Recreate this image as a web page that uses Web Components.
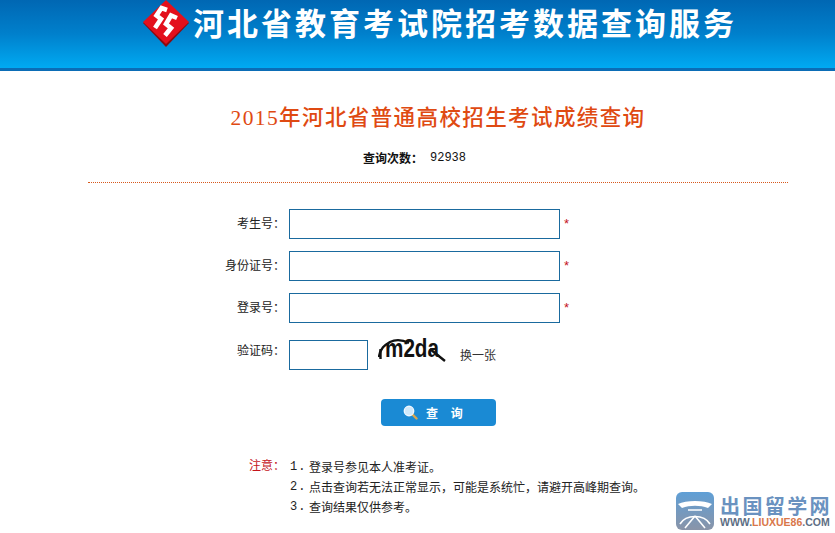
<!DOCTYPE html>
<html lang="zh">
<head>
<meta charset="utf-8">
<title>成绩查询</title>
<style>
  html, body { margin: 0; padding: 0; background: #fff; }
  body { font: 12px "Noto Sans CJK SC", "Liberation Sans", sans-serif; color: #222; height: 533px; overflow: hidden; position: relative; }
</style>
</head>
<body>
<exam-header>河北省教育考试院招考数据查询服务</exam-header>
<query-panel>
  <span slot="title">2015年河北省普通高校招生考试成绩查询</span>
  <span slot="count">92938</span>
  <form-row label="考生号：" required></form-row>
  <form-row label="身份证号：" required></form-row>
  <form-row label="登录号：" required></form-row>
  <captcha-row label="验证码："></captcha-row>
  <query-button>查 询</query-button>
  <notice-list>
    <notice-item n="1.">登录号参见本人准考证。</notice-item>
    <notice-item n="2.">点击查询若无法正常显示，可能是系统忙，请避开高峰期查询。</notice-item>
    <notice-item n="3.">查询结果仅供参考。</notice-item>
  </notice-list>
</query-panel>
<site-mark></site-mark>

<script>
class ExamHeader extends HTMLElement {
  connectedCallback() {
    this.attachShadow({ mode: 'open' }).innerHTML = `
    <style>
      :host {
        display: flex;
        align-items: flex-start;
        height: 68px;
        padding-left: 142px;
        background: linear-gradient(#0067b3, #0080cc 50%, #00aaf2);
        border-bottom: 3px solid #0b6db6;
      }
      svg { flex: none; display: block; }
      .name {
        margin: 0 0 0 3px;
        color: #fff;
        font-size: 31px;
        font-weight: 700;
        line-height: 44px;
        letter-spacing: 3px;
        white-space: nowrap;
      }
    </style>
    <svg width="48" height="47" viewBox="0 0 48 47">
      <path d="M24 3 47 23 24 47 1 23Z" fill="#8c0a10"/>
      <path d="M24 0 47 22 24 44 1 22Z" fill="#e3101c"/>
      <g fill="none" stroke="#fff" stroke-width="4.6" stroke-linejoin="miter">
        <path d="M25 10 19.5 8 14.5 15.5 19 19 13 28"/>
        <path d="M35 18 29 15.5 24 24 29 28 23 35.5"/>
      </g>
    </svg>
    <div class="name"><slot></slot></div>`;
  }
}

class QueryPanel extends HTMLElement {
  connectedCallback() {
    this.attachShadow({ mode: 'open' }).innerHTML = `
    <style>
      :host { display: block; width: 700px; margin-left: 88px; }
      h1 {
        margin: 0;
        padding-top: 31px;
        height: 32px;
        text-align: center;
        color: #df4a12;
        font: 500 21.5px/32px "Liberation Serif", "Noto Sans CJK SC", serif;
        letter-spacing: 1.4px;
      }
      .count {
        margin-top: 14px;
        height: 20px;
        line-height: 20px;
        padding-left: 275px;
        display: flex;
        color: #111;
      }
      .count b { width: 67px; }
      .count span { font-family: "Liberation Mono", monospace; font-size: 12px; }
      hr {
        margin: 14px 0 0;
        border: 0;
        border-top: 1px dotted #d8591c;
      }
      .rows { padding-top: 26px; display: grid; row-gap: 12px; }
    </style>
    <h1><slot name="title"></slot></h1>
    <div class="count"><b>查询次数：</b><span><slot name="count"></slot></span></div>
    <hr>
    <div class="rows"><slot></slot></div>`;
  }
}

class FormRow extends HTMLElement {
  connectedCallback() {
    this.attachShadow({ mode: 'open' }).innerHTML = `
    <style>
      :host { display: grid; grid-template-columns: 197px 271px 1fr; column-gap: 4px; align-items: start; height: 30px; }
      label { text-align: right; line-height: 28px; color: #222; white-space: nowrap; }
      input { box-sizing: border-box; width: 271px; height: 30px; margin: 0; border: 1px solid #1a6a9e; background: #fff; outline: none; }
      i { font: 13px/30px "Liberation Sans", sans-serif; color: #c4141c; }
    </style>
    <label>${this.getAttribute('label')}</label>
    <input type="text">
    ${this.hasAttribute('required') ? '<i>*</i>' : ''}`;
  }
}

class CaptchaRow extends HTMLElement {
  connectedCallback() {
    this.attachShadow({ mode: 'open' }).innerHTML = `
    <style>
      :host { display: grid; grid-template-columns: 197px 79px 82px auto; column-gap: 4px; height: 30px; margin-top: 5px; }
      label { text-align: right; line-height: 20px; white-space: nowrap; color: #222; }
      input { box-sizing: border-box; width: 79px; height: 30px; margin: 0; border: 1px solid #1a6a9e; background: #fff; outline: none; }
      svg { display: block; margin: -7px 0 0 6px; }
      a { padding-left: 2px; line-height: 30px; color: #333; white-space: nowrap; }
    </style>
    <label>${this.getAttribute('label')}</label>
    <input type="text">
    <svg width="76" height="30" viewBox="0 -4 76 30">
      <text x="7" y="20" font-family="Liberation Sans" font-weight="700" font-size="25" fill="#111" textLength="54" lengthAdjust="spacingAndGlyphs">m2da</text>
      <path d="M1 20C2 11 7 8 12 5 18 2 25 3 31 6" fill="none" stroke="#111" stroke-width="2.4"/>
      <path d="M2.5 12V22M52 12 67 24" fill="none" stroke="#111" stroke-width="2.4"/>
    </svg>
    <a>换一张</a>`;
  }
}

class QueryButton extends HTMLElement {
  connectedCallback() {
    this.attachShadow({ mode: 'open' }).innerHTML = `
    <style>
      :host { display: block; padding: 17px 0 0 293px; }
      button {
        display: flex;
        align-items: center;
        box-sizing: border-box;
        width: 115px;
        height: 27px;
        padding: 0 0 0 22px;
        border: 0;
        border-radius: 4px;
        background: #1a8ad4;
        color: #fff;
        font: 700 12px "Noto Sans CJK SC", sans-serif;
        white-space: pre;
      }
      svg { margin-right: 8px; }
      span { word-spacing: 10px; }
    </style>
    <button>
      <svg width="15" height="15" viewBox="0 0 15 15">
        <path d="M9 9 13.5 13.5" stroke="#d9a850" stroke-width="2.4" stroke-linecap="round"/>
        <circle cx="6" cy="6" r="4.7" fill="#cfe9fb" stroke="#eef7ff" stroke-width="1.4"/>
      </svg><span><slot></slot></span>
    </button>`;
  }
}

class NoticeList extends HTMLElement {
  connectedCallback() {
    this.attachShadow({ mode: 'open' }).innerHTML = `
    <style>
      :host { display: grid; grid-template-columns: 197px 1fr; column-gap: 5px; padding-top: 19px; }
      b { font-weight: 400; color: #c4141c; text-align: right; line-height: 20px; margin-top: -2px; }
      div { display: grid; }
    </style>
    <b>注意：</b>
    <div><slot></slot></div>`;
  }
}

class NoticeItem extends HTMLElement {
  connectedCallback() {
    this.attachShadow({ mode: 'open' }).innerHTML = `
    <style>
      :host { display: flex; line-height: 20px; color: #222; white-space: nowrap; }
      span { width: 19px; font-family: "Liberation Mono", monospace; letter-spacing: 1px; }
    </style>
    <span>${this.getAttribute('n')}</span><slot></slot>`;
  }
}

class SiteMark extends HTMLElement {
  connectedCallback() {
    this.attachShadow({ mode: 'open' }).innerHTML = `
    <style>
      :host { position: absolute; left: 676px; top: 492px; display: flex; gap: 6px; }
      .txt { display: flex; flex-direction: column; }
      .cn { font: 700 20px/18px "Noto Sans CJK SC", sans-serif; letter-spacing: 2.4px; color: #6a92c0; white-space: nowrap; margin-top: 5px; }
      .en { font: 700 10.5px/14px "Liberation Sans", sans-serif; color: #5d6e84; white-space: nowrap; }
      .en em { font-style: normal; color: #d9774a; }
    </style>
    <svg width="38" height="38" viewBox="0 0 38 38">
      <defs><linearGradient id="g" x1="0" y1="0" x2="0" y2="1">
        <stop offset="0" stop-color="#5f9fd6"/><stop offset="1" stop-color="#8a94a8"/>
      </linearGradient></defs>
      <rect width="38" height="38" rx="6" fill="url(#g)"/>
      <path d="M2 12C10 8 28 8 36 12L32 16C24 13 14 13 6 16Z" fill="#fff"/>
      <g fill="none" stroke="#fff" stroke-width="1.6">
        <path d="M4 32C10 22 28 22 34 32"/>
        <path d="M19 24 9 36M19 24 29 36M12 18H26"/>
      </g>
    </svg>
    <div class="txt"><span class="cn">出国留学网</span><span class="en">WWW.<em>LIUXUE86</em>.COM</span></div>`;
  }
}

customElements.define('exam-header', ExamHeader);
customElements.define('query-panel', QueryPanel);
customElements.define('form-row', FormRow);
customElements.define('captcha-row', CaptchaRow);
customElements.define('query-button', QueryButton);
customElements.define('notice-list', NoticeList);
customElements.define('notice-item', NoticeItem);
customElements.define('site-mark', SiteMark);
</script>
</body>
</html>
